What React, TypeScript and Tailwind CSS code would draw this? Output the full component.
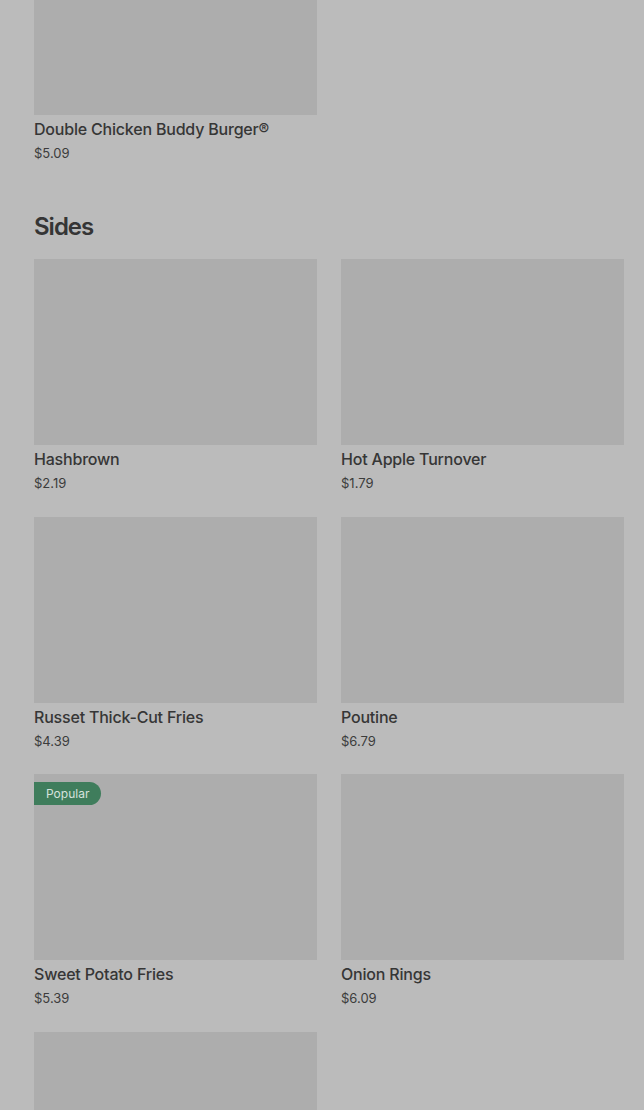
import React from "react";

type Item = { name: string; price: string; popular?: boolean };

const sides: Item[] = [
  { name: "Hashbrown", price: "$2.19" },
  { name: "Hot Apple Turnover", price: "$1.79" },
  { name: "Russet Thick-Cut Fries", price: "$4.39" },
  { name: "Poutine", price: "$6.79" },
  { name: "Sweet Potato Fries", price: "$5.39", popular: true },
  { name: "Onion Rings", price: "$6.09" },
  { name: "", price: "" },
];

const Card: React.FC<{ item: Item; cut?: boolean }> = ({ item, cut }) => (
  <div className="flex flex-col">
    <div className="relative h-[186px] bg-[#adadad]">
      {item.popular && (
        <span className="absolute left-0 top-2 rounded-r-full bg-[#3f7d5c] pl-3 pr-3 py-[3px] text-[12px] leading-[17px] text-[#d6e2dc]">
          Popular
        </span>
      )}
    </div>
    {!cut && (
      <>
        <p className="mt-0.5 text-[16px] leading-6 font-medium tracking-[-0.2px] text-[#363636]">{item.name}</p>
        <p className="mt-0.5 text-[13px] leading-5 text-[#3c3c3c]">{item.price}</p>
      </>
    )}
  </div>
);

const App: React.FC = () => {
  return (
    <div
      className="h-[1110px] overflow-hidden bg-[#bbbbbb] pl-[34px] pr-[20px]"
      style={{ fontFamily: "Inter, 'Noto Sans', sans-serif" }}
    >
      {/* previous section tail */}
      <div className="-mt-[71px] grid grid-cols-2 gap-x-6">
        <Card item={{ name: "Double Chicken Buddy Burger®", price: "$5.09" }} />
      </div>

      <h2 className="mt-12 mb-4 text-2xl leading-8 font-semibold tracking-[-1px] text-[#353535]">Sides</h2>
      <div className="grid grid-cols-2 gap-x-6 gap-y-[23.7px]">
        {sides.map((s, i) => (
          <Card key={i} item={s} cut={s.name === ""} />
        ))}
      </div>
    </div>
  );
};

export default App;
